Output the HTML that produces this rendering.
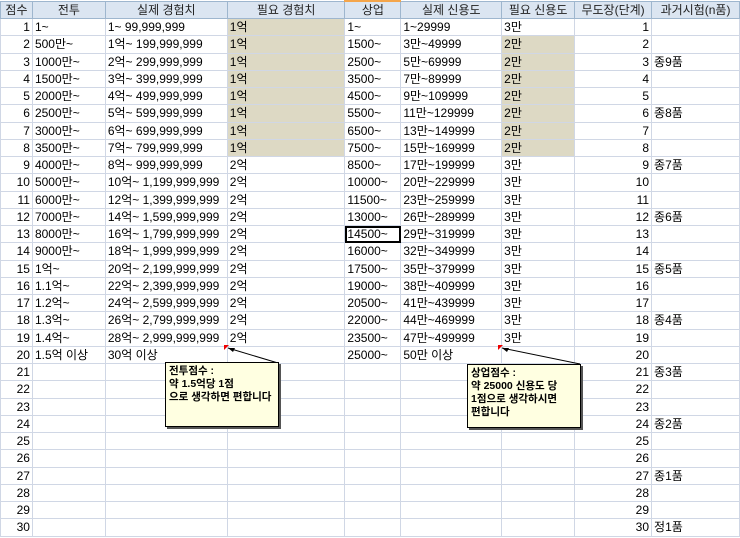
<!DOCTYPE html>
<html><head><meta charset="utf-8"><style>
html,body{margin:0;padding:0;background:#fff;width:740px;height:538px;overflow:hidden}
body{font-family:"Liberation Sans","Noto Sans CJK KR",sans-serif;font-size:12px;color:#000;position:relative}
table{border-collapse:collapse;table-layout:fixed;position:absolute;left:0;top:0}
td{height:16.25px;padding:0 2px;border:1px solid #d0d7e5;white-space:nowrap;overflow:hidden;line-height:16px}
tr.h td{height:16px;background:#dbe5f1;border:1px solid #9eb6ce;text-align:center;color:#1f1f1f}
td.n{text-align:right}
td.b{background:#ddd9c4}
.sel{outline:2px solid #000;outline-offset:-2px}
.note{position:absolute;background:#ffffe1;border:1px solid #000;box-shadow:2px 2px 0 #555;font-weight:bold;font-size:10.5px;line-height:13px;padding:2px 3px;box-sizing:border-box;white-space:nowrap;overflow:hidden}
svg{position:absolute;left:0;top:0}
</style></head><body>
<table>
<colgroup><col style="width:32px"><col style="width:73px"><col style="width:122px"><col style="width:118px"><col style="width:56px"><col style="width:101px"><col style="width:73px"><col style="width:77px"><col style="width:88px"></colgroup>
<tr class="h"><td>점수</td><td>전투</td><td>실제 경험치</td><td>필요 경험치</td><td style="border-top:2px solid #f4a54a">상업</td><td>실제 신용도</td><td>필요 신용도</td><td>무도장(단계)</td><td>과거시험(n품)</td></tr>
<tr><td class="n">1</td><td>1~</td><td>1~ 99,999,999</td><td class="b">1억</td><td>1~</td><td>1~29999</td><td>3만</td><td class="n">1</td><td></td></tr>
<tr><td class="n">2</td><td>500만~</td><td>1억~ 199,999,999</td><td class="b">1억</td><td>1500~</td><td>3만~49999</td><td class="b">2만</td><td class="n">2</td><td></td></tr>
<tr><td class="n">3</td><td>1000만~</td><td>2억~ 299,999,999</td><td class="b">1억</td><td>2500~</td><td>5만~69999</td><td class="b">2만</td><td class="n">3</td><td>종9품</td></tr>
<tr><td class="n">4</td><td>1500만~</td><td>3억~ 399,999,999</td><td class="b">1억</td><td>3500~</td><td>7만~89999</td><td class="b">2만</td><td class="n">4</td><td></td></tr>
<tr><td class="n">5</td><td>2000만~</td><td>4억~ 499,999,999</td><td class="b">1억</td><td>4500~</td><td>9만~109999</td><td class="b">2만</td><td class="n">5</td><td></td></tr>
<tr><td class="n">6</td><td>2500만~</td><td>5억~ 599,999,999</td><td class="b">1억</td><td>5500~</td><td>11만~129999</td><td class="b">2만</td><td class="n">6</td><td>종8품</td></tr>
<tr><td class="n">7</td><td>3000만~</td><td>6억~ 699,999,999</td><td class="b">1억</td><td>6500~</td><td>13만~149999</td><td class="b">2만</td><td class="n">7</td><td></td></tr>
<tr><td class="n">8</td><td>3500만~</td><td>7억~ 799,999,999</td><td class="b">1억</td><td>7500~</td><td>15만~169999</td><td class="b">2만</td><td class="n">8</td><td></td></tr>
<tr><td class="n">9</td><td>4000만~</td><td>8억~ 999,999,999</td><td>2억</td><td>8500~</td><td>17만~199999</td><td>3만</td><td class="n">9</td><td>종7품</td></tr>
<tr><td class="n">10</td><td>5000만~</td><td>10억~ 1,199,999,999</td><td>2억</td><td>10000~</td><td>20만~229999</td><td>3만</td><td class="n">10</td><td></td></tr>
<tr><td class="n">11</td><td>6000만~</td><td>12억~ 1,399,999,999</td><td>2억</td><td>11500~</td><td>23만~259999</td><td>3만</td><td class="n">11</td><td></td></tr>
<tr><td class="n">12</td><td>7000만~</td><td>14억~ 1,599,999,999</td><td>2억</td><td>13000~</td><td>26만~289999</td><td>3만</td><td class="n">12</td><td>종6품</td></tr>
<tr><td class="n">13</td><td>8000만~</td><td>16억~ 1,799,999,999</td><td>2억</td><td class="sel">14500~</td><td>29만~319999</td><td>3만</td><td class="n">13</td><td></td></tr>
<tr><td class="n">14</td><td>9000만~</td><td>18억~ 1,999,999,999</td><td>2억</td><td>16000~</td><td>32만~349999</td><td>3만</td><td class="n">14</td><td></td></tr>
<tr><td class="n">15</td><td>1억~</td><td>20억~ 2,199,999,999</td><td>2억</td><td>17500~</td><td>35만~379999</td><td>3만</td><td class="n">15</td><td>종5품</td></tr>
<tr><td class="n">16</td><td>1.1억~</td><td>22억~ 2,399,999,999</td><td>2억</td><td>19000~</td><td>38만~409999</td><td>3만</td><td class="n">16</td><td></td></tr>
<tr><td class="n">17</td><td>1.2억~</td><td>24억~ 2,599,999,999</td><td>2억</td><td>20500~</td><td>41만~439999</td><td>3만</td><td class="n">17</td><td></td></tr>
<tr><td class="n">18</td><td>1.3억~</td><td>26억~ 2,799,999,999</td><td>2억</td><td>22000~</td><td>44만~469999</td><td>3만</td><td class="n">18</td><td>종4품</td></tr>
<tr><td class="n">19</td><td>1.4억~</td><td>28억~ 2,999,999,999</td><td>2억</td><td>23500~</td><td>47만~499999</td><td>3만</td><td class="n">19</td><td></td></tr>
<tr><td class="n">20</td><td>1.5억 이상</td><td>30억 이상</td><td></td><td>25000~</td><td>50만 이상</td><td></td><td class="n">20</td><td></td></tr>
<tr><td class="n">21</td><td></td><td></td><td></td><td></td><td></td><td></td><td class="n">21</td><td>종3품</td></tr>
<tr><td class="n">22</td><td></td><td></td><td></td><td></td><td></td><td></td><td class="n">22</td><td></td></tr>
<tr><td class="n">23</td><td></td><td></td><td></td><td></td><td></td><td></td><td class="n">23</td><td></td></tr>
<tr><td class="n">24</td><td></td><td></td><td></td><td></td><td></td><td></td><td class="n">24</td><td>종2품</td></tr>
<tr><td class="n">25</td><td></td><td></td><td></td><td></td><td></td><td></td><td class="n">25</td><td></td></tr>
<tr><td class="n">26</td><td></td><td></td><td></td><td></td><td></td><td></td><td class="n">26</td><td></td></tr>
<tr><td class="n">27</td><td></td><td></td><td></td><td></td><td></td><td></td><td class="n">27</td><td>종1품</td></tr>
<tr><td class="n">28</td><td></td><td></td><td></td><td></td><td></td><td></td><td class="n">28</td><td></td></tr>
<tr><td class="n">29</td><td></td><td></td><td></td><td></td><td></td><td></td><td class="n">29</td><td></td></tr>
<tr><td class="n">30</td><td></td><td></td><td></td><td></td><td></td><td></td><td class="n">30</td><td>정1품</td></tr>
</table>
<svg width="740" height="538">
<polygon points="224,345 229,345 224,350" fill="#e00"/>
<polygon points="498,345 503,345 498,350" fill="#e00"/>
<line x1="228" y1="348" x2="278" y2="363" stroke="#000" stroke-width="1"/>
<polygon points="228,348 235,348 233,352" fill="#000"/>
<line x1="502" y1="348" x2="580" y2="364" stroke="#000" stroke-width="1"/>
<polygon points="502,348 509,348 507,352" fill="#000"/>
</svg>
<div class="note" style="left:165px;top:362px;width:114px;height:65px">전투점수 :<br>약 1.5억당 1점<br>으로 생각하면 편합니다</div>
<div class="note" style="left:467px;top:364px;width:114px;height:64px">상업점수 :<br>약 25000 신용도 당<br>1점으로 생각하시면<br>편합니다</div>
</body></html>
